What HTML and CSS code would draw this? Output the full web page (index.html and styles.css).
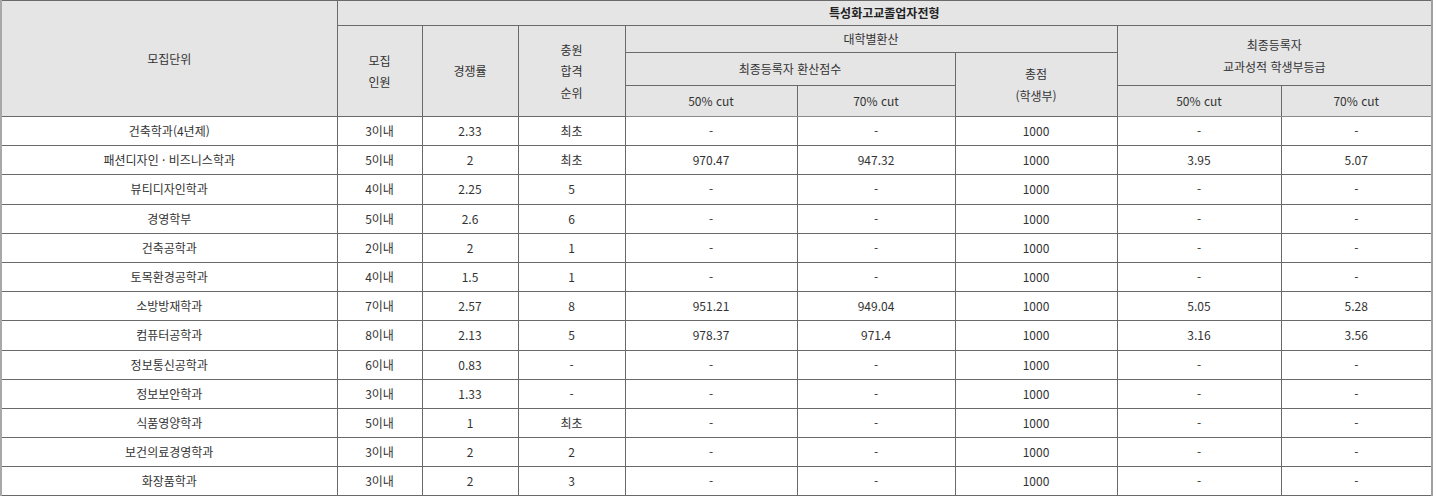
FILE: index.html
```html
<!DOCTYPE html>
<html lang="ko">
<head>
<meta charset="utf-8">
<title>특성화고교졸업자전형</title>
<link rel="stylesheet" href="styles.css">
</head>
<body>
<table class="result">
  <colgroup>
    <col class="c-unit">
    <col class="c-num">
    <col class="c-rate">
    <col class="c-rank">
    <col class="c-s50">
    <col class="c-s70">
    <col class="c-total">
    <col class="c-g50">
    <col class="c-g70">
  </colgroup>
  <thead>
    <tr class="h1">
      <th rowspan="4">모집단위</th>
      <th colspan="8" class="title">특성화고교졸업자전형</th>
    </tr>
    <tr class="h2">
      <th rowspan="3">모집<br>인원</th>
      <th rowspan="3">경쟁률</th>
      <th rowspan="3">충원<br>합격<br>순위</th>
      <th colspan="3">대학별환산</th>
      <th colspan="2" rowspan="2">최종등록자<br>교과성적 학생부등급</th>
    </tr>
    <tr class="h3">
      <th colspan="2">최종등록자 환산점수</th>
      <th rowspan="2">총점<br>(학생부)</th>
    </tr>
    <tr class="h4">
      <th>50% cut</th>
      <th>70% cut</th>
      <th>50% cut</th>
      <th>70% cut</th>
    </tr>
  </thead>
  <tbody>
    <tr><td>건축학과(4년제)</td><td>3이내</td><td>2.33</td><td>최초</td><td>-</td><td>-</td><td>1000</td><td>-</td><td>-</td></tr>
    <tr><td>패션디자인 · 비즈니스학과</td><td>5이내</td><td>2</td><td>최초</td><td>970.47</td><td>947.32</td><td>1000</td><td>3.95</td><td>5.07</td></tr>
    <tr><td>뷰티디자인학과</td><td>4이내</td><td>2.25</td><td>5</td><td>-</td><td>-</td><td>1000</td><td>-</td><td>-</td></tr>
    <tr><td>경영학부</td><td>5이내</td><td>2.6</td><td>6</td><td>-</td><td>-</td><td>1000</td><td>-</td><td>-</td></tr>
    <tr><td>건축공학과</td><td>2이내</td><td>2</td><td>1</td><td>-</td><td>-</td><td>1000</td><td>-</td><td>-</td></tr>
    <tr><td>토목환경공학과</td><td>4이내</td><td>1.5</td><td>1</td><td>-</td><td>-</td><td>1000</td><td>-</td><td>-</td></tr>
    <tr><td>소방방재학과</td><td>7이내</td><td>2.57</td><td>8</td><td>951.21</td><td>949.04</td><td>1000</td><td>5.05</td><td>5.28</td></tr>
    <tr><td>컴퓨터공학과</td><td>8이내</td><td>2.13</td><td>5</td><td>978.37</td><td>971.4</td><td>1000</td><td>3.16</td><td>3.56</td></tr>
    <tr><td>정보통신공학과</td><td>6이내</td><td>0.83</td><td>-</td><td>-</td><td>-</td><td>1000</td><td>-</td><td>-</td></tr>
    <tr><td>정보보안학과</td><td>3이내</td><td>1.33</td><td>-</td><td>-</td><td>-</td><td>1000</td><td>-</td><td>-</td></tr>
    <tr><td>식품영양학과</td><td>5이내</td><td>1</td><td>최초</td><td>-</td><td>-</td><td>1000</td><td>-</td><td>-</td></tr>
    <tr><td>보건의료경영학과</td><td>3이내</td><td>2</td><td>2</td><td>-</td><td>-</td><td>1000</td><td>-</td><td>-</td></tr>
    <tr><td>화장품학과</td><td>3이내</td><td>2</td><td>3</td><td>-</td><td>-</td><td>1000</td><td>-</td><td>-</td></tr>
  </tbody>
</table>
</body>
</html>
```

FILE: styles.css
```css
html, body {
  margin: 0;
  padding: 0;
  background: #ffffff;
}

.result {
  border-collapse: collapse;
  table-layout: fixed;
  width: 1433px;
  font-family: "Noto Sans CJK KR", "Noto Sans", sans-serif;
  font-size: 12px;
  color: #333333;
  border-left: 2px solid #a8a8a8;
  border-right: 2px solid #a0a0a0;
  border-top: 1px solid #666666;
}

.c-unit { width: 336px; }
.c-num { width: 85px; }
.c-rate { width: 96px; }
.c-rank { width: 107px; }
.c-s50 { width: 172px; }
.c-s70 { width: 158px; }
.c-total { width: 162px; }
.c-g50 { width: 164px; }
.c-g70 { width: 151px; }

.result th,
.result td {
  border: 1px solid #6a6a6a;
  padding: 0;
  text-align: center;
  vertical-align: middle;
  line-height: 21.5px;
}

.result th {
  background: #e5e5e5;
  font-weight: normal;
}

.result th.title {
  font-weight: bold;
  color: #222222;
}

.result thead tr:last-child th {
  border-bottom: 1px solid #8a8a8a;
}

.h1 { height: 25px; }
.h2 { height: 27px; }
.h3 { height: 33px; }
.h4 { height: 31px; }

.result tbody tr { height: 29.2px; }

.result tbody td { line-height: 16px; }
```
